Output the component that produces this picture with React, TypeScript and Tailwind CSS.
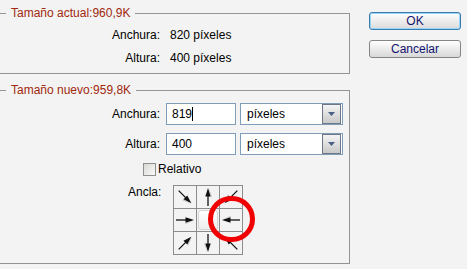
import React from 'react';

const font = { fontFamily: '"Liberation Sans", Arial, sans-serif' };

// flecha base apuntando a la derecha, se gira según la celda
function Arrow({ angle }: { angle: number }) {
  return (
    <svg width="22" height="22" viewBox="0 0 22 22">
      <g transform={`rotate(${angle} 11 11)`}>
        <line x1="2" y1="11" x2="13" y2="11" stroke="#111" strokeWidth="1.3" />
        <polygon points="20,11 11.5,8.3 11.5,13.7" fill="#111" />
        <polygon points="20,11.6 11.5,13.7 11.5,15" fill="#8a8a8a" opacity="0.5" />
      </g>
    </svg>
  );
}

const cells: (number | null)[] = [45, -90, 135, 0, null, 180, -45, 90, -135];

function AnchorGrid() {
  return (
    <div className="relative">
      <div className="grid grid-cols-[23px_23px_23px] border-l border-t border-[#8c8c8c] w-[70px]">
        {cells.map((a, i) => (
          <div key={i} className="w-[23px] h-[23px] border-r border-b border-[#8c8c8c] flex items-center justify-center">
            {a === null ? (
              <div className="w-[20px] h-[20px] rounded-[3px] border border-[#d4d4d4] bg-gradient-to-b from-white to-[#ededed]"></div>
            ) : (
              <Arrow angle={a} />
            )}
          </div>
        ))}
      </div>
      <div className="absolute left-[35px] top-[11px] w-[47px] h-[46px] rounded-full border-[5px] border-[#f00000]"></div>
    </div>
  );
}

function Select() {
  return (
    <div className="w-[103px] h-[22px] border border-[#7f9db9] bg-white flex items-center justify-between p-px">
      <span className="pl-[5px] text-[12px] text-black">píxeles</span>
      <div className="w-[19px] h-[20px] border border-[#6e7785] bg-gradient-to-b from-[#f4f4f4] to-[#c9c9c9] flex items-center justify-center">
        <svg width="7" height="4" viewBox="0 0 7 4">
          <polygon points="0,0 7,0 3.5,4" fill="#4a5f86" />
        </svg>
      </div>
    </div>
  );
}

export default function App() {
  return (
    <div className="w-[467px] h-[269px] bg-[#f3f3f3] flex text-[12px] text-black overflow-hidden" style={font}>
      {/* Columna izquierda */}
      <div className="w-[350px] pt-[6px]">
        <fieldset className="h-[68px] border border-l-0 border-[#949494]">
          <legend className="ml-[6px] px-[5px] leading-[14px] text-[#a1280e]">Tamaño actual:960,9K</legend>
          <div className="pt-[4px] grid grid-cols-[160px_auto] gap-x-[10px] leading-[23px]">
            <span className="text-right">Anchura:</span>
            <span>820 píxeles</span>
            <span className="text-right">Altura:</span>
            <span>400 píxeles</span>
          </div>
        </fieldset>

        <fieldset className="mt-[9px] h-[181px] border border-l-0 border-[#949494]">
          <legend className="ml-[6px] px-[5px] leading-[14px] text-[#a1280e]">Tamaño nuevo:959,8K</legend>
          <div className="pt-[6px] flex flex-col">
            <div className="flex items-center">
              <span className="w-[160px] text-right">Anchura:</span>
              <div className="ml-[6px] w-[70px] h-[22px] border border-[#7f9db9] bg-white flex items-center pl-[5px]">
                <span>819</span>
                <span className="w-px h-[14px] bg-black"></span>
              </div>
              <div className="ml-[4px]">
                <Select />
              </div>
            </div>
            <div className="flex items-center mt-[8px]">
              <span className="w-[160px] text-right">Altura:</span>
              <div className="ml-[6px] w-[70px] h-[22px] border border-[#7f9db9] bg-white flex items-center pl-[5px]">
                <span>400</span>
              </div>
              <div className="ml-[4px]">
                <Select />
              </div>
            </div>
            <div className="flex items-center mt-[8px] pl-[143px]">
              <div className="w-[13px] h-[13px] border border-[#8f8f8f] bg-gradient-to-br from-[#d8d8d4] to-[#fafafa]"></div>
              <span className="ml-[2px] leading-[13px]">Relativo</span>
            </div>
            <div className="flex mt-[9px] pl-[128px]">
              <span className="leading-[14px]">Ancla:</span>
              <div className="ml-[12px]">
                <AnchorGrid />
              </div>
            </div>
          </div>
        </fieldset>
      </div>

      {/* Botones */}
      <div className="ml-[19px] pt-[12px] flex flex-col gap-[10px]">
        <button className="w-[92px] h-[18px] rounded-[3px] border border-[#3a7ab0] shadow-[inset_0_0_0_1px_#96d6f6] bg-gradient-to-b from-white to-[#dadada] text-[#14146e] leading-[14px]">
          OK
        </button>
        <button className="w-[92px] h-[18px] rounded-[3px] border border-[#858585] bg-gradient-to-b from-white to-[#d8d8d8] text-[#14146e] leading-[14px]">
          Cancelar
        </button>
      </div>
    </div>
  );
}
